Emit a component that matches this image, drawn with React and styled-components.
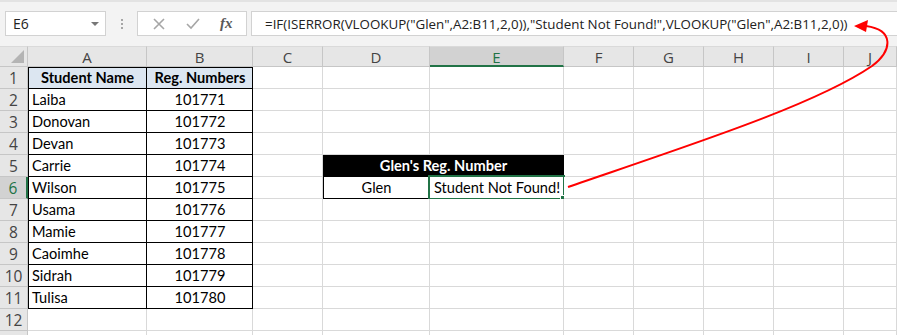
import React from 'react'
import styled, { createGlobalStyle, css } from 'styled-components'

const GlobalStyle = createGlobalStyle`
  html, body {
    margin: 0;
    padding: 0;
    background: #fff;
    overflow: hidden;
  }
`

const GREEN = '#217346'
const GRID = '#d9d9d9'

const Page = styled.div`
  position: relative;
  width: 897px;
  height: 335px;
  overflow: hidden;
`

const Toolbar = styled.div`
  height: 46px;
  box-sizing: border-box;
  background: #f3f3f3;
  border-top: 2px solid #e3e3e3;
  display: flex;
  align-items: flex-start;
  padding: 9px 0 0 5px;
  font-family: "Open Sans", "Noto Sans", sans-serif;
`

const NameBox = styled.div`
  width: 101px;
  height: 25px;
  box-sizing: border-box;
  background: #fff;
  border: 1px solid #d2d2d2;
  display: flex;
  align-items: center;
  justify-content: space-between;
  padding: 0 6px 0 7px;
  font-size: 14px;
  color: #222;
`

const DropArrow = styled.span`
  width: 0;
  height: 0;
  border-left: 4px solid transparent;
  border-right: 4px solid transparent;
  border-top: 4px solid #777;
`

const Dots = styled.div`
  width: 31px;
  height: 25px;
  display: flex;
  flex-direction: column;
  align-items: center;
  justify-content: center;
  gap: 2px;
  span {
    width: 2px;
    height: 2px;
    background: #a6a6a6;
  }
`

const FxBox = styled.div`
  width: 110px;
  height: 25px;
  box-sizing: border-box;
  background: #fff;
  border: 1px solid #d2d2d2;
  display: flex;
  align-items: center;
  justify-content: space-around;
  padding: 0 4px;
  margin-right: 4px;
`

const FxIcon = styled.span`
  font-family: "Liberation Serif", serif;
  font-style: italic;
  font-weight: bold;
  font-size: 15px;
  color: #595959;
`

const FormulaInput = styled.div`
  flex: 1;
  height: 25px;
  box-sizing: border-box;
  background: #fff;
  border: 1px solid #d2d2d2;
  border-right: none;
  display: flex;
  align-items: center;
  padding-left: 13px;
  font-family: "Open Sans", sans-serif;
  font-size: 13.35px;
  color: #222;
  white-space: nowrap;
`

const Sheet = styled.div`
  display: grid;
  grid-template-columns: 28px 119px 106px 70px 107px 134px 70px 70px 70px 70px 1fr;
  grid-template-rows: 21px repeat(13, 22px);
`

const Corner = styled.div`
  position: relative;
  background: #e6e6e6;
  border-right: 1px solid #c6c6c6;
  border-bottom: 1px solid #c6c6c6;
  border-top: 1px solid #dadada;
  box-sizing: border-box;
  &::after {
    content: '';
    position: absolute;
    right: 3px;
    bottom: 3px;
    width: 0;
    height: 0;
    border-left: 13px solid transparent;
    border-bottom: 13px solid #b4b4b4;
  }
`

const ColHead = styled.div`
  box-sizing: border-box;
  background: ${p => (p.$active ? '#d2d2d2' : '#e6e6e6')};
  color: ${p => (p.$active ? GREEN : '#444')};
  border-top: 1px solid #dadada;
  border-right: 1px solid #c6c6c6;
  border-bottom: ${p => (p.$active ? `2px solid ${GREEN}` : '1px solid #c6c6c6')};
  display: flex;
  align-items: center;
  justify-content: center;
  font-family: "Open Sans", sans-serif;
  font-size: 15px;
  padding-top: 1px;
`

const RowHead = styled.div`
  box-sizing: border-box;
  background: ${p => (p.$active ? '#d2d2d2' : '#e6e6e6')};
  color: ${p => (p.$active ? GREEN : '#444')};
  border-right: ${p => (p.$active ? `2px solid ${GREEN}` : '1px solid #c6c6c6')};
  border-bottom: 1px solid #c6c6c6;
  display: flex;
  align-items: center;
  justify-content: center;
  font-family: "Open Sans", sans-serif;
  font-size: 15.5px;
`

const Cell = styled.div`
  position: relative;
  box-sizing: border-box;
  grid-column: ${p => (p.$span ? `span ${p.$span}` : 'auto')};
  background: ${p => p.$bg || '#fff'};
  color: ${p => p.$color || '#000'};
  border-right: 1px solid ${p => (p.$box ? '#000' : GRID)};
  border-bottom: 1px solid ${p => (p.$box ? '#000' : GRID)};
  box-shadow: ${p =>
    [p.$left && 'inset 1px 0 0 #000', p.$top && 'inset 0 1px 0 #000'].filter(Boolean).join(', ') || 'none'};
  display: flex;
  align-items: flex-end;
  justify-content: ${p => (p.$align === 'center' ? 'center' : 'flex-start')};
  padding: 0 3px 2px 4px;
  font-family: "Lato", sans-serif;
  font-size: 14.6px;
  font-weight: ${p => (p.$bold ? 700 : 400)};
  white-space: nowrap;
  ${p =>
    p.$selected &&
    css`
      &::before {
        content: '';
        position: absolute;
        left: -2px;
        top: -2px;
        right: -2px;
        bottom: -2px;
        border: 2px solid ${GREEN};
      }
      &::after {
        content: '';
        position: absolute;
        right: -4px;
        bottom: -4px;
        width: 5px;
        height: 5px;
        background: ${GREEN};
        border: 1px solid #fff;
      }
    `}
`

const Overlay = styled.svg`
  position: absolute;
  left: 0;
  top: 0;
  pointer-events: none;
`

const COLS = ['A', 'B', 'C', 'D', 'E', 'F', 'G', 'H', 'I', 'J']

const students = [
  ['Laiba', 101771],
  ['Donovan', 101772],
  ['Devan', 101773],
  ['Carrie', 101774],
  ['Wilson', 101775],
  ['Usama', 101776],
  ['Mamie', 101777],
  ['Caoimhe', 101778],
  ['Sidrah', 101779],
  ['Tulisa', 101780],
]

const FORMULA =
  '=IF(ISERROR(VLOOKUP("Glen",A2:B11,2,0)),"Student Not Found!",VLOOKUP("Glen",A2:B11,2,0))'

function rowCells(r) {
  const cells = []
  for (let c = 0; c < COLS.length; c++) {
    const col = COLS[c]
    const key = `${col}${r}`
    if (r === 1 && col === 'A') {
      cells.push(<Cell key={key} $box $left $top $bold $align="center" $bg="#dce6f1">Student Name</Cell>)
    } else if (r === 1 && col === 'B') {
      cells.push(<Cell key={key} $box $top $bold $align="center" $bg="#dce6f1">Reg. Numbers</Cell>)
    } else if (r >= 2 && r <= 11 && col === 'A') {
      cells.push(<Cell key={key} $box $left>{students[r - 2][0]}</Cell>)
    } else if (r >= 2 && r <= 11 && col === 'B') {
      cells.push(<Cell key={key} $box $align="center">{students[r - 2][1]}</Cell>)
    } else if (r === 5 && col === 'D') {
      cells.push(
        <Cell key={key} $span={2} $box $bold $align="center" $bg="#000" $color="#fff">
          Glen's Reg. Number
        </Cell>
      )
      c++
    } else if (r === 6 && col === 'D') {
      cells.push(<Cell key={key} $box $left $align="center">Glen</Cell>)
    } else if (r === 6 && col === 'E') {
      cells.push(<Cell key={key} $box $selected $align="center">Student Not Found!</Cell>)
    } else {
      cells.push(<Cell key={key} />)
    }
  }
  return cells
}

function Arrow() {
  return (
    <Overlay width="897" height="335" viewBox="0 0 897 335">
      <path
        d="M568 187 C690 145, 815 105, 872 66 C893 50, 894 30, 866 26"
        fill="none"
        stroke="#ff0000"
        strokeWidth="2"
      />
      <polygon points="854,26 868,20 866,32" fill="#ff0000" />
    </Overlay>
  )
}

export default function App() {
  const rows = []
  for (let r = 1; r <= 13; r++) {
    rows.push(
      <React.Fragment key={r}>
        <RowHead $active={r === 6}>{r <= 12 ? r : ''}</RowHead>
        {rowCells(r)}
      </React.Fragment>
    )
  }

  return (
    <Page>
      <GlobalStyle />
      <Toolbar>
        <NameBox>
          E6
          <DropArrow />
        </NameBox>
        <Dots>
          <span />
          <span />
          <span />
        </Dots>
        <FxBox>
          <svg width="14" height="14" viewBox="0 0 14 14">
            <path d="M2 2 L12 12 M12 2 L2 12" stroke="#a6a6a6" strokeWidth="1.6" />
          </svg>
          <svg width="16" height="14" viewBox="0 0 16 14">
            <path d="M2 7 L6 11 L14 2" stroke="#a6a6a6" strokeWidth="1.6" fill="none" />
          </svg>
          <FxIcon>fx</FxIcon>
        </FxBox>
        <FormulaInput>{FORMULA}</FormulaInput>
      </Toolbar>
      <Sheet>
        <Corner />
        {COLS.map(c => (
          <ColHead key={c} $active={c === 'E'}>{c}</ColHead>
        ))}
        {rows}
      </Sheet>
      <Arrow />
    </Page>
  )
}
